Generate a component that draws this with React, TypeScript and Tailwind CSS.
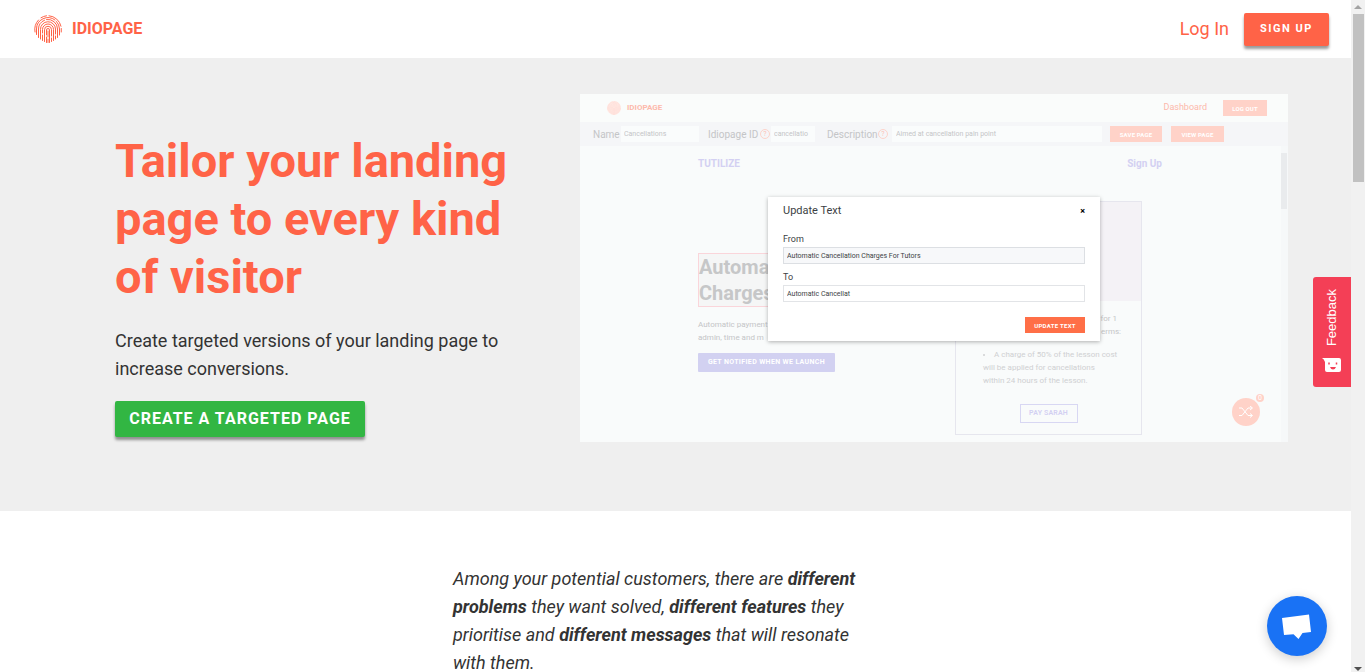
import React from "react";

const FingerprintLogo: React.FC<{ className?: string }> = ({ className }) => (
  <svg viewBox="0 0 56 56" className={className} fill="none" stroke="currentColor" strokeWidth="2" strokeLinecap="round">
    <path d="M14 5.5a26.5 26.5 0 0 1 11-4M30 1.500a26.500 26.500 0 0 1 24 21" />
    <path d="M2 34a27 27 0 0 1 7-24M54.500 27v7" />
    <path d="M5 39V28a23 23 0 0 1 37-18M45 13a23 23 0 0 1 6 15v12" />
    <path d="M9 45V28a19 19 0 0 1 12-17.500M25 9a19 19 0 0 1 22 19v17" />
    <path d="M13 48V29a15 15 0 0 1 30-1v10M43 42v6" />
    <path d="M17 51V40M17 36v-7a11 11 0 0 1 22 0v22" />
    <path d="M21 53V29.500a7 7 0 0 1 14 0V42M35 46v7" />
    <path d="M25 55V44M25 40V30a3 3 0 0 1 6 0v25" />
    <path d="M28 32v12M28 48v7" />
  </svg>
);

const Shuffle: React.FC = () => (
  <svg viewBox="0 0 16 12" className="h-3 w-4" fill="none" stroke="#fff" strokeWidth="1">
    <path d="M1 2h3l6 7.500h4M1 9.500h3l6-7.500h4M12 0l2.500 2L12 4M12 7.500l2.500 2-2.500 2" />
  </svg>
);

const Help: React.FC = () => (
  <span className="flex h-2.5 w-2.5 items-center justify-center rounded-full border border-[#fdd3ca] text-[7px] leading-none text-[#fdc0b4]">
    ?
  </span>
);

/* Faded editor with the text dialog open on top */
const EditorPreview: React.FC = () => (
  <div className="relative h-[348px] overflow-hidden bg-[#f9fbfb] text-[#c4c5c7]">
    <div className="flex h-7 items-center bg-[#fafcfb] pr-[21px] pl-[27px] text-[#fdb9ab]">
      <FingerprintLogo className="h-3.5 w-3.5 rounded-full bg-[#fff0ec] text-[#fed5cc]" />
      <span className="ml-1.5 text-[8px] font-bold">IDIOPAGE</span>
      <a href="#" className="mr-4 ml-auto text-[9px]">
        Dashboard
      </a>
      <button className="h-4 w-11 bg-[#ffd2c8] text-[6px] font-bold tracking-wide text-white">LOG OUT</button>
    </div>

    <div className="flex h-6 items-center bg-[#f5f6f8] pl-[13px] text-[10px]">
      <label htmlFor="name" className="w-7">
        Name
      </label>
      <input id="name" defaultValue="Cancellations" className="h-4 w-[78px] bg-[#fafcfc] px-[3px] text-[7px]" />
      <label htmlFor="idiopage-id" className="ml-[9px] w-[52px] whitespace-nowrap">
        Idiopage ID
      </label>
      <Help />
      <input id="idiopage-id" defaultValue="cancellatio" className="ml-px h-4 w-[44px] bg-[#fafcfc] px-[3px] text-[7px]" />
      <label htmlFor="description" className="ml-3 w-[51px]">
        Description
      </label>
      <Help />
      <input
        id="description"
        defaultValue="Aimed at cancellation pain point"
        className="ml-1 h-4 w-[210px] bg-[#fafcfc] px-1 text-[7px]"
      />
      <button className="ml-2 h-4 w-[52px] bg-[#ffd2c8] text-[6px] font-bold tracking-wide text-white">SAVE PAGE</button>
      <button className="ml-[9px] h-4 w-[53px] bg-[#ffd2c8] text-[6px] font-bold tracking-wide text-white">
        VIEW PAGE
      </button>
    </div>

    <div className="flex">
      <div className="flex-1 pt-[11px] pl-[118px]">
        <div className="flex w-[464px] justify-between text-[10px] leading-[14px] font-bold text-[#d3d0f2]">
          <span>TUTILIZE</span>
          <a href="#">Sign Up</a>
        </div>
        <div className="mt-[30px] flex">
          <div className="w-[257px] pt-[52px]">
            <h2 className="h-[54px] w-[230px] border border-[#fad5da] bg-[#f5f6f6] text-xl leading-[26px] font-bold whitespace-nowrap text-[#c6c7c8]">
              Automa
              <br />
              Charges
            </h2>
            <p className="mt-[11px] text-[8px] leading-[13px]">
              Automatic payment
              <br />
              admin, time and m
            </p>
            <button className="mt-[9px] h-[19px] w-[137px] rounded-[1px] bg-[#d2d1f1] text-[7px] font-bold tracking-wider text-white">
              GET NOTIFIED WHEN WE LAUNCH
            </button>
          </div>
          <div className="h-[234px] w-[187px] border border-[#e6e6ee] text-[8px] leading-[13px]">
            <div className="h-[99px] bg-[#f4f2f6]" />
            <div className="pt-[11px] pr-5 pl-36">
              <p className="pr-1 text-right">for 1</p>
              <p className="text-right">erms:</p>
            </div>
            <ul className="mt-2.5 list-inside list-disc pl-[27px] text-[#cfd0d2]">
              <li>
                A charge of 50% of the lesson cost
                <br />
                will be applied for cancellations
                <br />
                within 24 hours of the lesson.
              </li>
            </ul>
            <button className="mx-auto mt-[17px] block h-[19px] w-[58px] border border-[#d8d7f3] text-[7px] leading-none font-semibold tracking-wide text-[#d3d0f2]">
              PAY SARAH
            </button>
          </div>
        </div>
      </div>
      <div className="h-[296px] w-[7px] bg-[#f6f8f9] pt-[7px]">
        <div className="h-14 w-1.5 bg-[#e9ebed]" />
      </div>
    </div>

    <div className="absolute right-7 bottom-4 flex h-7 w-7 items-center justify-center rounded-full bg-[#ffd2c8]">
      <Shuffle />
      <span className="absolute -top-1 -right-1 flex h-2 w-2 items-center justify-center rounded-full bg-[#ffd2c8] text-[7px] text-white">
        0
      </span>
    </div>

    <div className="absolute top-[103px] left-[188px] w-[332px] bg-white px-[15px] pt-1.5 pb-2 text-[#3c3f44] shadow-[0_1px_4px_rgba(0,0,0,0.3)]">
      <div className="flex h-4 items-center justify-between text-[11px]">
        <span>Update Text</span>
        <button aria-label="Close" className="text-[9px] leading-3 font-bold text-black">
          ×
        </button>
      </div>
      <label htmlFor="from" className="mt-3 block text-[9px] leading-4">
        From
      </label>
      <input
        id="from"
        readOnly
        value="Automatic Cancellation Charges For Tutors"
        className="block h-[17px] w-full border border-[#dcdfe3] bg-[#f7f8fa] px-[3px] text-[7px]"
      />
      <label htmlFor="to" className="mt-[5px] block text-[9px] leading-4">
        To
      </label>
      <input
        id="to"
        defaultValue="Automatic Cancellat"
        className="block h-[17px] w-full border border-[#e2e4e7] px-[3px] text-[7px]"
      />
      <button className="mt-[15px] ml-auto block h-4 w-[60px] bg-[#ff6f47] text-[6px] font-bold tracking-wider text-white">
        UPDATE TEXT
      </button>
    </div>
  </div>
);

const App: React.FC = () => {
  return (
    <div className="relative flex h-screen overflow-hidden bg-white font-[Roboto,'Liberation_Sans',sans-serif] text-[#333]">
      <div className="min-w-0 flex-1">
        {/* Header */}
        <header className="flex h-[58px] items-center justify-between pr-[22px] pl-[34px] text-[#ff6347]">
          <a href="#" className="flex items-center gap-2.5">
            <FingerprintLogo className="h-7 w-7" />
            <span className="text-base font-bold">IDIOPAGE</span>
          </a>
          <div className="flex items-center gap-[15px]">
            <a href="#" className="text-lg">
              Log In
            </a>
            <button className="h-[33px] w-[85px] rounded-xs bg-[#ff6347] text-[11px] font-bold tracking-[1.5px] text-white shadow-[0_3px_3px_rgba(0,0,0,0.4)]">
              SIGN UP
            </button>
          </div>
        </header>

        {/* Hero */}
        <section className="grid h-[453px] grid-cols-[465fr_708fr] bg-[#efefef] pt-9 pr-[63px] pl-[115px]">
          <div className="pt-[38px] pr-10">
            <h1 className="text-[47px] leading-[58px] font-bold text-[#ff6347]">
              Tailor your landing page to every kind of visitor
            </h1>
            <p className="mt-[21px] text-lg leading-7">
              Create targeted versions of your landing page to increase conversions.
            </p>
            <button className="mt-[18px] h-9 w-[250px] rounded-xs bg-[#32b643] text-base font-bold tracking-[1px] whitespace-nowrap text-white shadow-[0_3px_3px_rgba(0,0,0,0.4)]">
              CREATE A TARGETED PAGE
            </button>
          </div>
          <div>
            <EditorPreview />
          </div>
        </section>

        {/* Intro */}
        <section className="pt-[54px]">
          <p className="mx-auto max-w-[445px] pr-5 text-lg leading-7 italic">
            Among your potential customers, there are <b>different problems</b> they want solved,{" "}
            <b>different features</b> they prioritise and <b>different messages</b> that will resonate with them.
          </p>
        </section>
      </div>

      {/* Scrollbar */}
      <div className="flex w-3.5 flex-col items-center justify-between bg-[#f1f1f1]">
        <div>
          <svg viewBox="0 0 14 14" className="h-3.5 w-3.5" fill="#a3a3a3">
            <path d="M3 9l4-4 4 4z" />
          </svg>
          <div className="mx-auto h-[168px] w-[11px] bg-[#c1c1c1]" />
        </div>
        <svg viewBox="0 0 14 14" className="h-3.5 w-3.5" fill="#505050">
          <path d="M3 9l4 4 4-4z" />
        </svg>
      </div>

      {/* Feedback tab */}
      <button className="absolute top-[277px] right-3.5 flex h-[110px] w-[38px] flex-col items-center gap-3 rounded-l-[3px] bg-[#f43f56] pt-3 text-white">
        <span className="rotate-180 font-['Liberation_Sans',sans-serif] text-[13px] leading-5 [writing-mode:vertical-rl]">
          Feedback
        </span>
        <svg viewBox="0 0 20 15" className="h-[15px] w-5">
          <path d="M0 0h17q2 0 2 2v10q0 2-2 2H5q-2 0-2-2V4Q2 1 0 0z" fill="#fff" />
          <path d="M7 4.500v2M14.500 4.500v2" stroke="#f43f56" strokeWidth="1.500" />
          <path d="M8 9h6q-1 2.500-3 2.500T8 9z" fill="#f43f56" />
        </svg>
      </button>

      {/* Chat launcher */}
      <button
        aria-label="Open chat"
        className="absolute right-[38px] bottom-4 flex h-15 w-15 items-center justify-center rounded-full bg-[#1972f5] shadow-[0_3px_12px_rgba(0,0,0,0.2)]"
      >
        <svg viewBox="0 0 60 60" className="h-15 w-15" fill="#fff">
          <path d="M15 22l27-3.500 2 17.500-8.500 1-4 6-5-4.700-9.500.7z" />
        </svg>
      </button>
    </div>
  );
};

export default App;
